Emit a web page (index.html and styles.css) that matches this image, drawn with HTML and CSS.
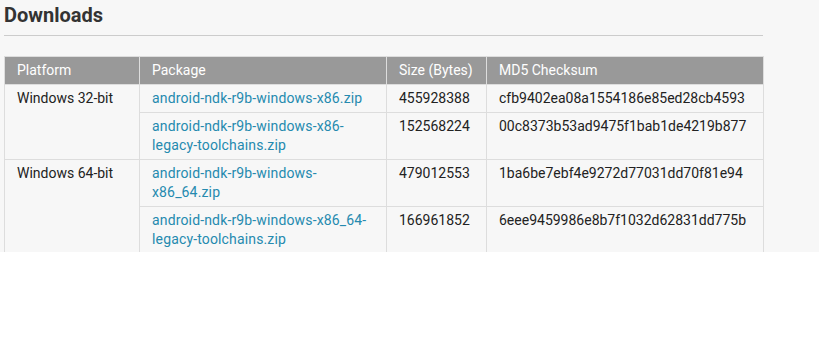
FILE: index.html
```html
<!DOCTYPE html>
<html>
<head>
<meta charset="utf-8">
<link rel="stylesheet" href="styles.css">
</head>
<body>
<div class="page">
  <div class="content">
    <h2 class="title">Downloads</h2>
    <hr class="rule">
    <table class="downloads">
      <colgroup>
        <col class="c-platform">
        <col class="c-package">
        <col class="c-size">
        <col class="c-md5">
      </colgroup>
      <thead>
        <tr>
          <th>Platform</th>
          <th>Package</th>
          <th>Size (Bytes)</th>
          <th>MD5 Checksum</th>
        </tr>
      </thead>
      <tbody>
        <tr>
          <td rowspan="2">Windows 32-bit</td>
          <td><a href="#">android-ndk-r9b-windows-x86.zip</a></td>
          <td>455928388</td>
          <td>cfb9402ea08a1554186e85ed28cb4593</td>
        </tr>
        <tr>
          <td><a href="#">android-ndk-r9b-windows-x86-legacy-toolchains.zip</a></td>
          <td>152568224</td>
          <td>00c8373b53ad9475f1bab1de4219b877</td>
        </tr>
        <tr>
          <td rowspan="2">Windows 64-bit</td>
          <td><a href="#">android-ndk-r9b-windows-x86_64.zip</a></td>
          <td>479012553</td>
          <td>1ba6be7ebf4e9272d77031dd70f81e94</td>
        </tr>
        <tr>
          <td><a href="#">android-ndk-r9b-windows-x86_64-legacy-toolchains.zip</a></td>
          <td>166961852</td>
          <td>6eee9459986e8b7f1032d62831dd775b</td>
        </tr>
      </tbody>
    </table>
  </div>
</div>
</body>
</html>
```

FILE: styles.css
```css
html, body {
  margin: 0;
  padding: 0;
  background: #ffffff;
}
.page {
  height: 252px;
  overflow: hidden;
  background: #f7f7f7;
  font-family: Roboto, "Liberation Sans", sans-serif;
  color: #222222;
}
.content {
  width: 759px;
  margin-left: 4px;
  padding-top: 3px;
}
.title {
  margin: 0;
  font-size: 20px;
  line-height: 24px;
  font-weight: 700;
  color: #333333;
}
.rule {
  margin: 8px 0 0 0;
  border: 0;
  height: 1px;
  background: #cccccc;
}
.downloads {
  margin-top: 20px;
  width: 759px;
  table-layout: fixed;
  border-collapse: collapse;
  border: 1px solid #dddddd;
  font-size: 14px;
  line-height: 19px;
}
.c-platform { width: 135px; }
.c-package { width: 247px; }
.c-size { width: 100px; }
.c-md5 { width: 277px; }
.downloads th {
  background: #999999;
  color: #ffffff;
  font-weight: 400;
  text-align: left;
  padding: 4px 12px;
  border: 1px solid #dddddd;
  border-top: 0;
}
.downloads td {
  padding: 4px 12px;
  border: 1px solid #dddddd;
  vertical-align: top;
  color: #222222;
}
.downloads a {
  color: #258aaf;
  text-decoration: none;
  letter-spacing: 0.15px;
}
```
